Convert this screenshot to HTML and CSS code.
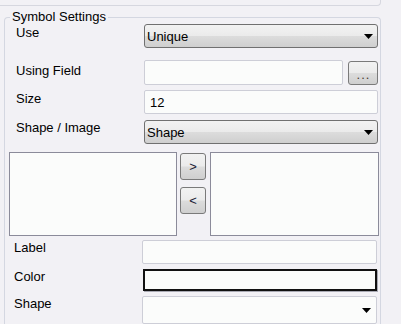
FILE: index.html
```html
<!DOCTYPE html>
<html lang="en">
<head>
    <meta charset="UTF-8">
    <title>Symbol Settings</title>
    <link rel="stylesheet" href="styles.css">
</head>
<body>
    <div class="topbar"></div>
    <fieldset class="group">
        <legend>Symbol Settings</legend>

        <div class="row row-use">
            <div class="lbl">Use</div>
            <div class="combo">
                <span>Unique</span>
                <svg class="arrow" width="9" height="5" viewBox="0 0 9 5"><polygon points="0,0 9,0 4.5,5" fill="#000"/></svg>
            </div>
        </div>

        <div class="row row-field">
            <div class="lbl">Using Field</div>
            <div class="field short"></div>
            <div class="btn dots">...</div>
        </div>

        <div class="row row-size">
            <div class="lbl">Size</div>
            <div class="field"><span>12</span></div>
        </div>

        <div class="row row-shape">
            <div class="lbl">Shape / Image</div>
            <div class="combo">
                <span>Shape</span>
                <svg class="arrow" width="9" height="5" viewBox="0 0 9 5"><polygon points="0,0 9,0 4.5,5" fill="#000"/></svg>
            </div>
        </div>

        <div class="lists">
            <div class="list left"></div>
            <div class="movers">
                <div class="btn move">&gt;</div>
                <div class="btn move">&lt;</div>
            </div>
            <div class="list right"></div>
        </div>

        <div class="row low row-label">
            <div class="lbl">Label</div>
            <div class="field"></div>
        </div>

        <div class="row low row-color">
            <div class="lbl">Color</div>
            <div class="swatch"></div>
        </div>

        <div class="row low row-pick">
            <div class="lbl">Shape</div>
            <div class="field pick">
                <svg class="arrow" width="9" height="5" viewBox="0 0 9 5"><polygon points="0,0 9,0 4.5,5" fill="#000"/></svg>
            </div>
        </div>
    </fieldset>
</body>
</html>
```

FILE: styles.css
```css
body {
    margin: 0;
    background-color: #f2f1f5;
    color: #000;
    font-family: 'Liberation Sans', Arial, sans-serif;
    font-size: 13px;
    line-height: 15px;
    width: 401px;
    height: 324px;
    overflow: hidden;
}
.topbar {
    box-sizing: border-box;
    width: 381px;
    height: 6px;
    border-bottom: 1px solid #d6d7df;
    border-right: 1px solid #d6d7df;
    border-bottom-right-radius: 4px;
}
.group {
    box-sizing: border-box;
    width: 377px;
    height: 314px;
    margin: 4px 0 0 4px;
    padding: 0;
    border: 1px solid #d4d7e1;
    border-bottom: none;
    border-radius: 4px 4px 0 0;
}
.group legend {
    margin-left: 5px;
    padding: 0 2px;
    line-height: 14px;
}
.row {
    display: flex;
    align-items: flex-start;
    margin-left: 11px;
}
.row.low {
    margin-left: 9px;
}
.lbl {
    width: 128px;
    flex: none;
}

/* vertical rhythm of rows */
.row-use { height: 24px; }
.row-use .lbl { padding-top: 1px; }
.row-field { margin-top: 12px; height: 25px; }
.row-field .lbl { padding-top: 3px; }
.row-size { margin-top: 5px; height: 24px; }
.row-size .lbl { padding-top: 1px; }
.row-shape { margin-top: 6px; height: 24px; }
.row-label { margin-top: 4px; height: 24px; }
.row-color { margin-top: 5px; height: 22px; }
.row-pick { margin-top: 5px; height: 28px; }

.combo {
    box-sizing: border-box;
    width: 234px;
    height: 24px;
    display: flex;
    align-items: center;
    justify-content: space-between;
    padding: 0 4px 0 2px;
    border: 1px solid #707070;
    border-radius: 3px;
    background: linear-gradient(#f2f2f2 0%, #ebebeb 48%, #dcdcdc 52%, #cfcfcf 100%);
}
.arrow {
    display: block;
    flex: none;
}
.field {
    box-sizing: border-box;
    width: 234px;
    height: 100%;
    display: flex;
    align-items: center;
    padding-left: 5px;
    background-color: #fbfcfb;
    border: 1px solid #cdced7;
    border-radius: 2px;
}
.row.low .field {
    width: 235px;
}
.field.short {
    width: 199px;
}
.field.pick {
    justify-content: flex-end;
    padding-right: 5px;
}
.btn {
    box-sizing: border-box;
    display: flex;
    align-items: center;
    justify-content: center;
    border: 1px solid #7a7a7a;
    border-radius: 3px;
    background: linear-gradient(#f2f2f2 0%, #ebebeb 48%, #dcdcdc 52%, #cfcfcf 100%);
    color: #1a1a33;
}
.dots {
    width: 30px;
    height: 24px;
    margin: 1px 0 0 5px;
    font-size: 13px;
    letter-spacing: 1px;
    color: #4a3a30;
    padding: 2px 0 0 1px;
}
.lists {
    display: flex;
    margin: 8px 0 0 4px;
    height: 84px;
}
.list {
    box-sizing: border-box;
    height: 84px;
    background-color: #fbfcfb;
    border: 1px solid #8b8b9a;
}
.list.left {
    width: 168px;
}
.list.right {
    width: 169px;
}
.movers {
    display: flex;
    flex-direction: column;
    gap: 7px;
    width: 26px;
    margin: 1px 4px 0 3px;
}
.move {
    height: 27px;
    font-size: 13px;
}
.swatch {
    box-sizing: border-box;
    width: 234px;
    height: 22px;
    margin-left: 1px;
    background-color: #fbfcfb;
    border: 2px solid #111;
    box-shadow: 1px 1px 0 #a9aab3;
}
```
